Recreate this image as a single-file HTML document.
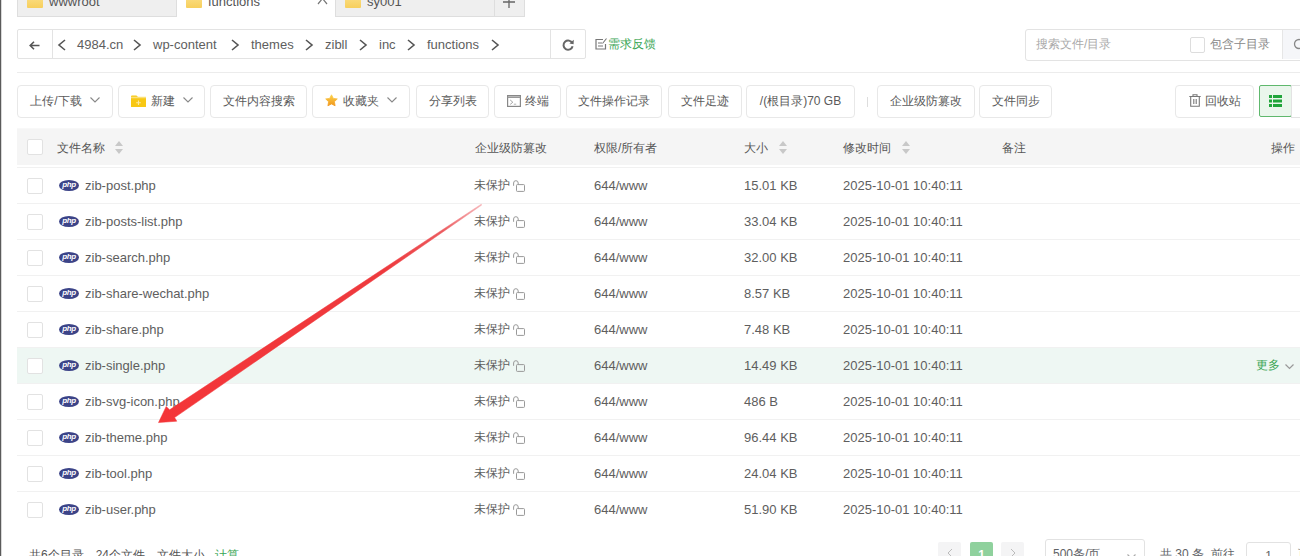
<!DOCTYPE html>
<html><head><meta charset="utf-8"><style>
*{box-sizing:border-box;margin:0;padding:0}
html,body{width:1300px;height:556px;overflow:hidden;background:#fff}
body{position:relative;font-family:"Liberation Sans",sans-serif;font-size:13px;color:#555}
.a{position:absolute;white-space:nowrap}
svg{position:absolute;overflow:visible}
.tab{top:-15px;height:32px;border:1px solid #dedede;background:#efefef}
.tab.act{background:#fff;border-bottom:0}
.fold{position:absolute;width:16px;height:13px;top:9px;left:9px;background:linear-gradient(#fbe08a,#f7cf5c);border-radius:1px}
.tt{position:absolute;top:8px;font-size:13px;color:#555;line-height:15px}
.crumb{top:37px;font-size:13px;color:#5e5e5e;line-height:15px}
.btn{top:85px;height:33px;border:1px solid #e8e8e8;border-radius:4px;background:#fff;font-size:12px;color:#5a5a5a;line-height:30px;text-align:center}
.th{top:141px;font-size:12px;color:#555;line-height:14px}
.cb{position:absolute;width:16px;height:16px;border:1px solid #e2e2e2;border-radius:2px;background:#fff}
.row{position:absolute;left:17px;width:1283px;height:36px;border-top:1px solid #f1f1f1}
.td{position:absolute;top:10px;font-size:13px;color:#5e5e5e;line-height:15px;white-space:nowrap}
.php{position:absolute;left:42px;top:12px;width:20px;height:11px;border-radius:50%;background:#3c4488;color:#fff;font-size:8px;font-style:italic;font-weight:bold;line-height:10px;text-align:center;letter-spacing:-0.4px}
</style></head><body>
<div class="a" style="left:0;top:0;width:1px;height:556px;background:#5a5a5a"></div><div class="a" style="left:1px;top:0;width:1px;height:556px;background:#d8d8d8"></div>
<div class="a tab" style="left:17px;width:160px"><div class="fold"></div><div class="tt" style="left:31px">wwwroot</div></div>
<div class="a tab act" style="left:176px;width:160px"><div class="fold"></div><div class="tt" style="left:31px">functions</div><svg style="left:141px;top:12px" width="9" height="6"><polyline points="0,6 4.5,0.5 9,6" fill="none" stroke="#777" stroke-width="1.2"/></svg></div>
<div class="a tab" style="left:335px;width:160px"><div class="fold"></div><div class="tt" style="left:31px">sy001</div></div>
<div class="a tab" style="left:494px;width:31px"><svg style="left:8px;top:10px" width="12" height="12"><path d="M6 0V12M0 6H12" stroke="#666" stroke-width="1.3"/></svg></div>
<div class="a" style="left:17px;top:29px;width:569px;height:30px;border:1px solid #e3e3e3;border-radius:2px"></div>
<div class="a" style="left:52px;top:30px;width:1px;height:28px;background:#e3e3e3"></div>
<div class="a" style="left:550px;top:30px;width:1px;height:28px;background:#e3e3e3"></div>
<svg style="left:29px;top:41px" width="11" height="9"><path d="M10.5 4.5H1.2M5 0.8L1.2 4.5L5 8.2" fill="none" stroke="#555" stroke-width="1.6"/></svg>
<svg style="left:59px;top:40px" width="6" height="10"><polyline points="6,0 0,5.0 6,10" fill="none" stroke="#555" stroke-width="1.6"/></svg>
<div class="a crumb" style="left:77px">4984.cn</div>
<div class="a crumb" style="left:153px">wp-content</div>
<div class="a crumb" style="left:251px">themes</div>
<div class="a crumb" style="left:325px">zibll</div>
<div class="a crumb" style="left:379px">inc</div>
<div class="a crumb" style="left:427px">functions</div>
<svg style="left:134px;top:40px" width="6" height="10"><polyline points="0,0 6,5.0 0,10" fill="none" stroke="#555" stroke-width="1.6"/></svg>
<svg style="left:232px;top:40px" width="6" height="10"><polyline points="0,0 6,5.0 0,10" fill="none" stroke="#555" stroke-width="1.6"/></svg>
<svg style="left:306px;top:40px" width="6" height="10"><polyline points="0,0 6,5.0 0,10" fill="none" stroke="#555" stroke-width="1.6"/></svg>
<svg style="left:360px;top:40px" width="6" height="10"><polyline points="0,0 6,5.0 0,10" fill="none" stroke="#555" stroke-width="1.6"/></svg>
<svg style="left:408px;top:40px" width="6" height="10"><polyline points="0,0 6,5.0 0,10" fill="none" stroke="#555" stroke-width="1.6"/></svg>
<svg style="left:492px;top:40px" width="6" height="10"><polyline points="0,0 6,5.0 0,10" fill="none" stroke="#555" stroke-width="1.6"/></svg>
<svg style="left:562px;top:39px" width="12" height="12"><path d="M10.3 4.2A4.6 4.6 0 1 0 10.6 7.2" fill="none" stroke="#666" stroke-width="2"/><path d="M11.8 0.8L11.6 5.2L7.4 4.6Z" fill="#666"/></svg>
<svg style="left:595px;top:38px" width="12" height="12"><path d="M8 1.5H1V11H10.5V6" fill="none" stroke="#777" stroke-width="1.2"/><path d="M3 5H7M3 8H8M7.5 5.5L11.5 0.5" fill="none" stroke="#777" stroke-width="1.1"/></svg>
<div class="a" style="left:608px;top:37px;font-size:12px;color:#3aa655;line-height:15px">需求反馈</div>
<div class="a" style="left:1025px;top:29px;width:290px;height:32px;border:1px solid #e3e3e3;border-radius:3px;background:#fff"></div>
<div class="a" style="left:1036px;top:37px;font-size:12px;color:#aaa;line-height:15px">搜索文件/目录</div>
<div class="a" style="left:1190px;top:37px;width:15px;height:16px;border:1px solid #ddd;border-radius:2px"></div>
<div class="a" style="left:1210px;top:37px;font-size:12px;color:#888;line-height:15px">包含子目录</div>
<div class="a" style="left:1282px;top:30px;width:20px;height:29px;background:#f5f6f9;border-left:1px solid #e6e6e6"></div>
<svg style="left:1293px;top:38px" width="12" height="12"><circle cx="6" cy="6" r="4.5" fill="none" stroke="#888" stroke-width="1.3"/></svg>
<div class="a" style="left:17px;top:72px;width:1283px;height:1px;background:#ececec"></div>
<div class="a btn" style="left:17px;width:96px">上传/下载<span style="display:inline-block;width:10px;height:6px;margin-left:8px;position:relative;vertical-align:2px"><svg style="left:0;top:0" width="10" height="6"><polyline points="0.5,0.5 5,5 9.5,0.5" fill="none" stroke="#888" stroke-width="1.1"/></svg></span></div>
<div class="a btn" style="left:118px;width:87px"><svg style="position:relative;display:inline-block;vertical-align:-2px;margin-right:5px" width="15" height="12"><path d="M0 1.5Q0 0.5 1 0.5H5.5L7 2H14Q15 2 15 3V11.5Q15 12 14.5 12H0.5Q0 12 0 11.5Z" fill="#f8c814"/><path d="M0 2.5H15" stroke="#fbe07a" stroke-width="1.5"/><path d="M7.5 5.5V10M5.2 7.8H9.8" stroke="#fde9a0" stroke-width="1.1"/></svg>新建<span style="display:inline-block;width:10px;height:6px;margin-left:8px;position:relative;vertical-align:2px"><svg style="left:0;top:0" width="10" height="6"><polyline points="0.5,0.5 5,5 9.5,0.5" fill="none" stroke="#888" stroke-width="1.1"/></svg></span></div>
<div class="a btn" style="left:210px;width:97px">文件内容搜索</div>
<div class="a btn" style="left:312px;width:98px"><svg style="position:relative;display:inline-block;vertical-align:-2px;margin-right:5px" width="13" height="13"><defs><linearGradient id="sg" x1="0" y1="0" x2="0" y2="1"><stop offset="0" stop-color="#fcd24a"/><stop offset="1" stop-color="#f0961c"/></linearGradient></defs><path d="M6.5 0.8L8.3 4.4L12.3 4.9L9.4 7.7L10.1 11.8L6.5 9.9L2.9 11.8L3.6 7.7L0.7 4.9L4.7 4.4Z" fill="url(#sg)" stroke="url(#sg)" stroke-width="0.8" stroke-linejoin="round"/></svg>收藏夹<span style="display:inline-block;width:10px;height:6px;margin-left:8px;position:relative;vertical-align:2px"><svg style="left:0;top:0" width="10" height="6"><polyline points="0.5,0.5 5,5 9.5,0.5" fill="none" stroke="#888" stroke-width="1.1"/></svg></span></div>
<div class="a btn" style="left:416px;width:73px">分享列表</div>
<div class="a btn" style="left:494px;width:67px"><svg style="position:relative;display:inline-block;vertical-align:-2px;margin-right:4px" width="14" height="12"><rect x="0.6" y="0.6" width="12.8" height="10.8" fill="none" stroke="#888" stroke-width="1.2"/><path d="M0.6 2.2H13.4" stroke="#999" stroke-width="1.6"/><path d="M3.2 5L5.8 7.2L3.2 9.4" fill="none" stroke="#999" stroke-width="0.9"/><path d="M6.8 9.2H9.2" stroke="#aaa" stroke-width="0.9"/></svg>终端</div>
<div class="a btn" style="left:566px;width:96px">文件操作记录</div>
<div class="a btn" style="left:668px;width:74px">文件足迹</div>
<div class="a btn" style="left:746px;width:109px">/(根目录)70 GB</div>
<div class="a btn" style="left:877px;width:98px">企业级防篡改</div>
<div class="a btn" style="left:979px;width:73px">文件同步</div>
<div class="a btn" style="left:1175px;width:79px"><svg style="position:relative;display:inline-block;vertical-align:-2px;margin-right:5px;left:1px" width="12" height="13"><path d="M0.3 2.5H11.7M4 2.5V0.8H8V2.5M1.7 2.5V12.3H10.3V2.5M4.8 5V10M7.2 5V10" fill="none" stroke="#777" stroke-width="1.1"/></svg>回收站</div>
<div class="a" style="left:867px;top:97px;width:1px;height:10px;background:#ddd"></div>
<div class="a" style="left:1259px;top:85px;width:33px;height:32px;border:1px solid #5fb86d;border-radius:2px;background:#eaf6ec"></div>
<svg style="left:1269px;top:95px" width="13" height="12"><path d="M0 0H3V3H0ZM4 0H13V3H4ZM0 4.5H3V7.5H0ZM4 4.5H13V7.5H4ZM0 9H3V12H0ZM4 9H13V12H4Z" fill="#20a53a"/></svg>
<div class="a" style="left:1291px;top:85px;width:20px;height:33px;border:1px solid #e3e3e3;background:#fff"></div>
<div class="a" style="left:17px;top:128px;width:1283px;height:1px;background:#f8f8f8"></div>
<div class="a" style="left:17px;top:129px;width:1283px;height:36px;background:#f5f5f5"></div>
<div class="cb" style="left:27px;top:139px"></div>
<div class="a th" style="left:57px">文件名称</div>
<div class="a th" style="left:475px">企业级防篡改</div>
<div class="a th" style="left:594px">权限/所有者</div>
<div class="a th" style="left:744px">大小</div>
<div class="a th" style="left:843px">修改时间</div>
<div class="a th" style="left:1002px">备注</div>
<div class="a th" style="left:1271px">操作</div>
<svg style="left:115px;top:141px" width="8" height="13"><path d="M4 0 L8 5 L0 5Z M0 8 L8 8 L4 13Z" fill="#c8c8c8"/></svg>
<svg style="left:779px;top:141px" width="8" height="13"><path d="M4 0 L8 5 L0 5Z M0 8 L8 8 L4 13Z" fill="#c8c8c8"/></svg>
<svg style="left:902px;top:141px" width="8" height="13"><path d="M4 0 L8 5 L0 5Z M0 8 L8 8 L4 13Z" fill="#c8c8c8"/></svg>
<div class="row" style="top:167px;"><div class="cb" style="left:10px;top:10px"></div><div class="php">php</div><div class="td" style="left:68px">zib-post.php</div><div class="td" style="left:457px;font-size:12px">未保护</div><svg style="left:496px;top:12px" width="12" height="12"><path d="M0.6 5.8V3A2.3 2.3 0 0 1 5.2 3V4.6" fill="none" stroke="#999" stroke-width="1"/><rect x="3.5" y="4.6" width="8" height="6.8" rx="0.8" fill="none" stroke="#999" stroke-width="1"/></svg><div class="td" style="left:577px">644/www</div><div class="td" style="left:727px">15.01 KB</div><div class="td" style="left:826px">2025-10-01 10:40:11</div></div>
<div class="row" style="top:203px;"><div class="cb" style="left:10px;top:10px"></div><div class="php">php</div><div class="td" style="left:68px">zib-posts-list.php</div><div class="td" style="left:457px;font-size:12px">未保护</div><svg style="left:496px;top:12px" width="12" height="12"><path d="M0.6 5.8V3A2.3 2.3 0 0 1 5.2 3V4.6" fill="none" stroke="#999" stroke-width="1"/><rect x="3.5" y="4.6" width="8" height="6.8" rx="0.8" fill="none" stroke="#999" stroke-width="1"/></svg><div class="td" style="left:577px">644/www</div><div class="td" style="left:727px">33.04 KB</div><div class="td" style="left:826px">2025-10-01 10:40:11</div></div>
<div class="row" style="top:239px;"><div class="cb" style="left:10px;top:10px"></div><div class="php">php</div><div class="td" style="left:68px">zib-search.php</div><div class="td" style="left:457px;font-size:12px">未保护</div><svg style="left:496px;top:12px" width="12" height="12"><path d="M0.6 5.8V3A2.3 2.3 0 0 1 5.2 3V4.6" fill="none" stroke="#999" stroke-width="1"/><rect x="3.5" y="4.6" width="8" height="6.8" rx="0.8" fill="none" stroke="#999" stroke-width="1"/></svg><div class="td" style="left:577px">644/www</div><div class="td" style="left:727px">32.00 KB</div><div class="td" style="left:826px">2025-10-01 10:40:11</div></div>
<div class="row" style="top:275px;"><div class="cb" style="left:10px;top:10px"></div><div class="php">php</div><div class="td" style="left:68px">zib-share-wechat.php</div><div class="td" style="left:457px;font-size:12px">未保护</div><svg style="left:496px;top:12px" width="12" height="12"><path d="M0.6 5.8V3A2.3 2.3 0 0 1 5.2 3V4.6" fill="none" stroke="#999" stroke-width="1"/><rect x="3.5" y="4.6" width="8" height="6.8" rx="0.8" fill="none" stroke="#999" stroke-width="1"/></svg><div class="td" style="left:577px">644/www</div><div class="td" style="left:727px">8.57 KB</div><div class="td" style="left:826px">2025-10-01 10:40:11</div></div>
<div class="row" style="top:311px;"><div class="cb" style="left:10px;top:10px"></div><div class="php">php</div><div class="td" style="left:68px">zib-share.php</div><div class="td" style="left:457px;font-size:12px">未保护</div><svg style="left:496px;top:12px" width="12" height="12"><path d="M0.6 5.8V3A2.3 2.3 0 0 1 5.2 3V4.6" fill="none" stroke="#999" stroke-width="1"/><rect x="3.5" y="4.6" width="8" height="6.8" rx="0.8" fill="none" stroke="#999" stroke-width="1"/></svg><div class="td" style="left:577px">644/www</div><div class="td" style="left:727px">7.48 KB</div><div class="td" style="left:826px">2025-10-01 10:40:11</div></div>
<div class="row" style="top:347px;background:#eef7f3;"><div class="cb" style="left:10px;top:10px"></div><div class="php">php</div><div class="td" style="left:68px">zib-single.php</div><div class="td" style="left:457px;font-size:12px">未保护</div><svg style="left:496px;top:12px" width="12" height="12"><path d="M0.6 5.8V3A2.3 2.3 0 0 1 5.2 3V4.6" fill="none" stroke="#999" stroke-width="1"/><rect x="3.5" y="4.6" width="8" height="6.8" rx="0.8" fill="none" stroke="#999" stroke-width="1"/></svg><div class="td" style="left:577px">644/www</div><div class="td" style="left:727px">14.49 KB</div><div class="td" style="left:826px">2025-10-01 10:40:11</div><div class="td" style="left:1239px;font-size:12px;color:#3aa655">更多</div><svg style="left:1268px;top:16px" width="9" height="5"><polyline points="0.5,0.5 4.5,4.5 8.5,0.5" fill="none" stroke="#999" stroke-width="1.2"/></svg></div>
<div class="row" style="top:383px;"><div class="cb" style="left:10px;top:10px"></div><div class="php">php</div><div class="td" style="left:68px">zib-svg-icon.php</div><div class="td" style="left:457px;font-size:12px">未保护</div><svg style="left:496px;top:12px" width="12" height="12"><path d="M0.6 5.8V3A2.3 2.3 0 0 1 5.2 3V4.6" fill="none" stroke="#999" stroke-width="1"/><rect x="3.5" y="4.6" width="8" height="6.8" rx="0.8" fill="none" stroke="#999" stroke-width="1"/></svg><div class="td" style="left:577px">644/www</div><div class="td" style="left:727px">486 B</div><div class="td" style="left:826px">2025-10-01 10:40:11</div></div>
<div class="row" style="top:419px;"><div class="cb" style="left:10px;top:10px"></div><div class="php">php</div><div class="td" style="left:68px">zib-theme.php</div><div class="td" style="left:457px;font-size:12px">未保护</div><svg style="left:496px;top:12px" width="12" height="12"><path d="M0.6 5.8V3A2.3 2.3 0 0 1 5.2 3V4.6" fill="none" stroke="#999" stroke-width="1"/><rect x="3.5" y="4.6" width="8" height="6.8" rx="0.8" fill="none" stroke="#999" stroke-width="1"/></svg><div class="td" style="left:577px">644/www</div><div class="td" style="left:727px">96.44 KB</div><div class="td" style="left:826px">2025-10-01 10:40:11</div></div>
<div class="row" style="top:455px;"><div class="cb" style="left:10px;top:10px"></div><div class="php">php</div><div class="td" style="left:68px">zib-tool.php</div><div class="td" style="left:457px;font-size:12px">未保护</div><svg style="left:496px;top:12px" width="12" height="12"><path d="M0.6 5.8V3A2.3 2.3 0 0 1 5.2 3V4.6" fill="none" stroke="#999" stroke-width="1"/><rect x="3.5" y="4.6" width="8" height="6.8" rx="0.8" fill="none" stroke="#999" stroke-width="1"/></svg><div class="td" style="left:577px">644/www</div><div class="td" style="left:727px">24.04 KB</div><div class="td" style="left:826px">2025-10-01 10:40:11</div></div>
<div class="row" style="top:491px;"><div class="cb" style="left:10px;top:10px"></div><div class="php">php</div><div class="td" style="left:68px">zib-user.php</div><div class="td" style="left:457px;font-size:12px">未保护</div><svg style="left:496px;top:12px" width="12" height="12"><path d="M0.6 5.8V3A2.3 2.3 0 0 1 5.2 3V4.6" fill="none" stroke="#999" stroke-width="1"/><rect x="3.5" y="4.6" width="8" height="6.8" rx="0.8" fill="none" stroke="#999" stroke-width="1"/></svg><div class="td" style="left:577px">644/www</div><div class="td" style="left:727px">51.90 KB</div><div class="td" style="left:826px">2025-10-01 10:40:11</div></div>
<div class="a" style="left:29px;top:548px;font-size:12px;color:#555;line-height:15px">共6个目录，24个文件，文件大小<span style="display:inline-block;width:10px"></span><span style="color:#3aa655">计算</span></div>
<div class="a" style="left:938px;top:542px;width:23px;height:24px;background:#f4f4f5;border-radius:2px"></div>
<svg style="left:948px;top:549px" width="4" height="8"><polyline points="4,0 0,4.0 4,8" fill="none" stroke="#bbb" stroke-width="1"/></svg>
<div class="a" style="left:970px;top:542px;width:23px;height:24px;background:#8fd19d;border-radius:2px;color:#fff;font-size:12px;font-weight:bold;text-align:center;line-height:26px">1</div>
<div class="a" style="left:1001px;top:542px;width:23px;height:24px;background:#f4f4f5;border-radius:2px"></div>
<svg style="left:1011px;top:549px" width="4" height="8"><polyline points="0,0 4,4.0 0,8" fill="none" stroke="#bbb" stroke-width="1"/></svg>
<div class="a" style="left:1045px;top:539px;width:100px;height:28px;border:1px solid #e2e2e2;border-radius:3px"></div>
<div class="a" style="left:1053px;top:547px;font-size:12px;color:#606266;line-height:15px">500条/页</div>
<svg style="left:1127px;top:554px" width="9" height="5"><polyline points="0.5,0.5 4.5,4.5 8.5,0.5" fill="none" stroke="#aaa" stroke-width="1.2"/></svg>
<div class="a" style="left:1160px;top:547px;font-size:12px;color:#606266;line-height:15px">共 30 条&nbsp;&nbsp;前往</div>
<div class="a" style="left:1246px;top:542px;width:45px;height:26px;border:1px solid #e2e2e2;border-radius:3px;text-align:center;font-size:12px;line-height:27px;color:#606266">1</div>
<div class="a" style="left:1298px;top:547px;font-size:12px;color:#606266;line-height:15px">页</div>
<svg style="left:0;top:0" width="1300" height="556"><defs><linearGradient id="ag" gradientUnits="userSpaceOnUse" x1="481" y1="205" x2="160" y2="422"><stop offset="0" stop-color="#f6b0b4"/><stop offset="0.12" stop-color="#ec5a5e"/><stop offset="0.3" stop-color="#ee3a3e"/><stop offset="1" stop-color="#f43538"/></linearGradient></defs><path d="M481.2 204.2 L481.8 205.0 L174.6 417.6 L176.8 421.2 L158.5 422.6 L166.2 406.4 L169.6 409.8 Z" fill="url(#ag)" stroke="url(#ag)" stroke-width="0.5" stroke-linejoin="round"/></svg>
</body></html>
